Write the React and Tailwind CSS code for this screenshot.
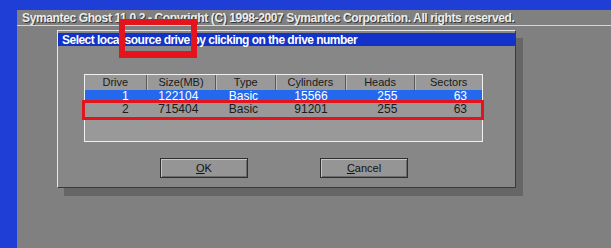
import React from "react";

const cols = [
  { name: "Drive", w: "w-[62px]" },
  { name: "Size(MB)", w: "w-[70px]" },
  { name: "Type", w: "w-[60px]" },
  { name: "Cylinders", w: "w-[70px]" },
  { name: "Heads", w: "w-[70px]" },
  { name: "Sectors", w: "w-[67px]" },
];

const rows = [
  ["1", "122104", "Basic", "15566", "255", "63"],
  ["2", "715404", "Basic", "91201", "255", "63"],
];

function Row({ data, selected, h }) {
  return (
    <div className={`flex ${h} ${selected ? "bg-[#2468ee] text-white" : "text-[#1a1a1a]"}`}>
      {data.map((d, i) => (
        <div key={i} className={`${cols[i].w} flex items-center justify-end ${i === 5 ? "pr-[15px]" : "pr-[18px]"} text-[12px] leading-none`}>
          {d}
        </div>
      ))}
    </div>
  );
}

function Button({ children }) {
  return (
    <div className="w-[88px] h-[20px] border border-[#2e2e2e] bg-[#959595] shadow-[inset_1px_1px_0_#c4c4c4,inset_-1px_-1px_0_#6a6a6a] flex items-center justify-center text-[11px] text-[#111] leading-none">
      {children}
    </div>
  );
}

export default function App() {
  return (
    <div className="relative w-[611px] h-[248px] overflow-hidden bg-[#1e3ed6] flex flex-col font-['Liberation_Sans',sans-serif]">
      <div className="h-[10px] shrink-0" />
      <div className="flex flex-1">
        <div className="w-[17px] shrink-0" />
        <div className="flex-1 bg-[#808080] flex flex-col">
          <div className="h-[15px] flex items-center pl-[5px] text-[12px] font-bold text-[#ededed] tracking-[-0.37px] whitespace-nowrap [text-shadow:1px_1px_0_#3a3a3a]">
            Symantec Ghost 11.0.2 - Copyright (C) 1998-2007 Symantec Corporation. All rights reserved.
          </div>
          <div className="h-[1px] bg-[#d6d6d6]" />
          <div className="pl-[40px] pt-[4px]">
            <div className="w-[459px] h-[158px] bg-[#878787] border-t border-l border-t-[#e6e6e6] border-l-[#e6e6e6] border-r border-b border-r-[#3a3a3a] border-b-[#3a3a3a] shadow-[7px_8px_0_#666666] flex flex-col">
              <div className="mt-[2px] h-[13px] bg-[#1232c8] flex items-center pl-[4px] text-[12px] font-bold text-white tracking-[-0.52px] whitespace-nowrap leading-none">
                Select local source drive by clicking on the drive number
              </div>
              <div className="ml-[26px] mt-[28px] w-[399px] h-[68px] border border-[#f0f0f0] bg-[#999999] flex flex-col">
                <div className="flex h-[15px]">
                  {cols.map((c, i) => (
                    <div
                      key={c.name}
                      className={`${c.w} flex items-center justify-center text-[11px] text-[#1a1a1a] leading-none ${i < 5 ? "border-r border-r-[#585858] shadow-[1px_0_0_#bdbdbd]" : ""}`}
                    >
                      {c.name}
                    </div>
                  ))}
                </div>
                <Row data={rows[0]} selected h="h-[12px]" />
                <Row data={rows[1]} h="h-[13px]" />
              </div>
              <div className="flex mt-[16px] ml-[102px] gap-[72px]">
                <Button>
                  <span className="underline underline-offset-1">O</span>K
                </Button>
                <Button>
                  <span className="underline underline-offset-1">C</span>ancel
                </Button>
              </div>
            </div>
          </div>
        </div>
      </div>
      <div className="absolute left-[119px] top-[19px] w-[78px] h-[39px] border-[6px] border-b-[7px] border-[#e4141c]" />
      <div className="absolute left-[82px] top-[100px] w-[402px] h-[20px] border-[3px] border-[#e4141c]" />
    </div>
  );
}
